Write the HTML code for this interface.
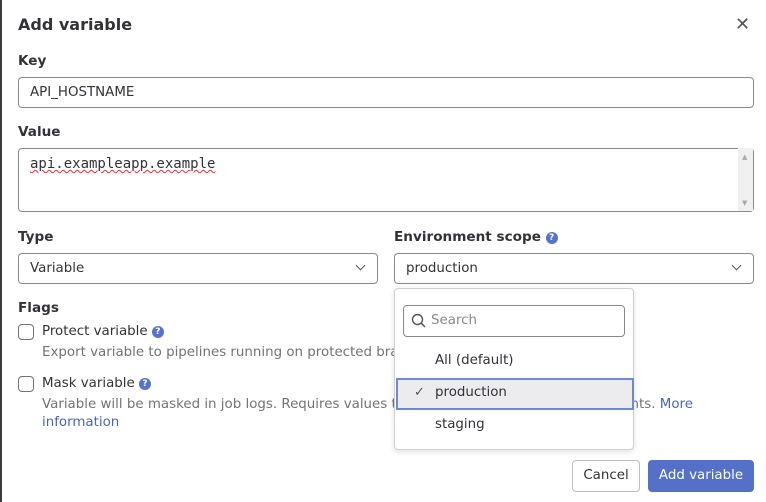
<!DOCTYPE html>
<html><head><style>
*{box-sizing:border-box;margin:0;padding:0}
body{width:766px;height:502px;overflow:hidden;background:#fff;font-family:"DejaVu Sans","Liberation Sans",sans-serif;font-size:13.4px;color:#333238;position:relative}
.bl{position:absolute;left:0;top:0;width:2px;height:502px;background:#3a3a3a}
.a{position:absolute}
.lbl{font-weight:bold;font-size:13.6px;color:#333238}
.inp{border:1px solid #89888d;border-radius:4px;background:#fff}
.help{display:inline-block;width:12px;height:12px;border-radius:50%;background:#5672cd;color:#fff;font-size:9px;font-weight:bold;text-align:center;line-height:12px;vertical-align:1px}
.cb{width:16px;height:16px;border:1px solid #737278;border-radius:4px}
.desc{color:#737278}
.chev{position:absolute;width:7px;height:7px;border-right:1.3px solid #555;border-bottom:1.3px solid #555;transform:rotate(45deg)}
</style></head><body>
<div class="bl"></div>
<div class="a" style="left:18px;top:15px;font-size:16px;font-weight:bold">Add variable</div>
<div class="a" style="left:735px;top:14px;font-size:18px;color:#555">✕</div>
<div class="a lbl" style="left:18px;top:53px">Key</div>
<div class="a inp" style="left:18px;top:77px;width:736px;height:31px;padding:7px 11px">API_HOSTNAME</div>
<div class="a lbl" style="left:18px;top:124px">Value</div>
<div class="a inp" style="left:18px;top:148px;width:736px;height:64px;padding:7px 11px;font-family:'DejaVu Sans Mono',monospace;font-size:14px"><span style="text-decoration:underline wavy #d33;text-decoration-thickness:1px">api.exampleapp.example</span></div>
<div class="a" style="left:738px;top:148px;width:15px;height:63px;background:#f0f0f0"></div>
<div class="a" style="left:742px;top:153px;font-size:7px;color:#aaa">▲</div>
<div class="a" style="left:742px;top:199px;font-size:7px;color:#aaa">▼</div>
<div class="a lbl" style="left:18px;top:229px">Type</div>
<div class="a inp" style="left:18px;top:253px;width:360px;height:31px;padding:7px 11px">Variable</div>
<div class="chev" style="left:357px;top:262px"></div>
<div class="a lbl" style="left:394px;top:229px">Environment scope <span class="help">?</span></div>
<div class="a inp" style="left:394px;top:253px;width:360px;height:31px;padding:7px 11px">production</div>
<div class="chev" style="left:733px;top:262px"></div>
<div class="a lbl" style="left:18px;top:300px">Flags</div>
<div class="a cb" style="left:18px;top:324px"></div>
<div class="a" style="left:42px;top:324px">Protect variable <span class="help">?</span></div>
<div class="a desc" style="left:42px;top:345px">Export variable to pipelines running on protected branches and tags only.</div>
<div class="a cb" style="left:18px;top:376px"></div>
<div class="a" style="left:42px;top:376px">Mask variable <span class="help">?</span></div>
<div class="a desc" style="left:42px;top:396px;width:560px;line-height:18px;white-space:nowrap">Variable will be masked in job logs. Requires values to meet regexp<br><span style="color:#4a64c4">information</span></div>
<div class="a desc" style="right:73px;top:396px;line-height:18px;white-space:nowrap">requirements. <span style="color:#4a64c4">More</span></div>
<div class="a" style="left:394px;top:288px;width:240px;height:162px;background:#fff;border:1px solid #d0d0d4;border-radius:4px;box-shadow:0 2px 6px rgba(0,0,0,.12)">
 <div class="a inp" style="left:8px;top:16px;width:222px;height:32px;padding:7px 0 0 27px;color:#89888d">Search</div>
 <svg class="a" style="left:16px;top:24px" width="16" height="16" viewBox="0 0 16 16"><circle cx="6.5" cy="6.5" r="5" fill="none" stroke="#555" stroke-width="1.4"/><path d="M10.2 10.2L14 14" stroke="#555" stroke-width="1.5"/></svg>
 <div class="a" style="left:40px;top:64px">All (default)</div>
 <div class="a" style="left:1px;top:89px;width:238px;height:32px;background:#ececef;border:2px solid #6f8ad4"></div>
 <div class="a" style="left:19px;top:96px;font-size:13px;color:#555">✓</div>
 <div class="a" style="left:40px;top:96px">production</div>
 <div class="a" style="left:40px;top:128px">staging</div>
</div>
<div class="a" style="left:572px;top:460px;width:68px;height:32px;border:1px solid #bfbfc3;border-radius:4px;text-align:center;line-height:30px">Cancel</div>
<div class="a" style="left:648px;top:460px;width:106px;height:32px;background:#5470c8;color:#fff;border-radius:4px;text-align:center;line-height:32px">Add variable</div>
</body></html>
